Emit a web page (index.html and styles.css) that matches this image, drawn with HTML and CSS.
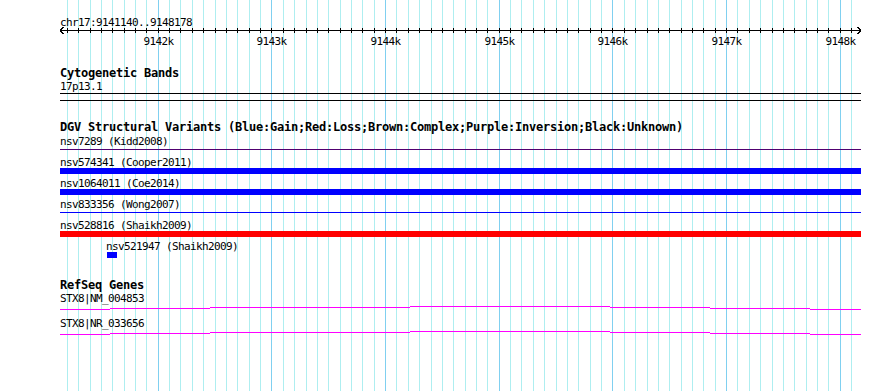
FILE: index.html
```html
<!DOCTYPE html>
<html>
    <head>
        <title>chr17:9141140..9148178</title>
        <link rel="stylesheet" href="styles.css">
    </head>
    <body>
        <div class="view">
            <!-- 100bp grid, major lines every kb -->
            <svg class="grid" width="890" height="391">
                <path class="minor" d="M67.5 0V391M78.5 0V391M90.5 0V391M101.5 0V391M112.5 0V391M124.5 0V391M135.5 0V391M146.5 0V391M169.5 0V391M180.5 0V391M192.5 0V391M203.5 0V391M215.5 0V391M226.5 0V391M237.5 0V391M249.5 0V391M260.5 0V391M283.5 0V391M294.5 0V391M306.5 0V391M317.5 0V391M328.5 0V391M340.5 0V391M351.5 0V391M362.5 0V391M374.5 0V391M396.5 0V391M408.5 0V391M419.5 0V391M431.5 0V391M442.5 0V391M453.5 0V391M465.5 0V391M476.5 0V391M487.5 0V391M510.5 0V391M521.5 0V391M533.5 0V391M544.5 0V391M556.5 0V391M567.5 0V391M578.5 0V391M590.5 0V391M601.5 0V391M624.5 0V391M635.5 0V391M647.5 0V391M658.5 0V391M669.5 0V391M681.5 0V391M692.5 0V391M703.5 0V391M715.5 0V391M737.5 0V391M749.5 0V391M760.5 0V391M772.5 0V391M783.5 0V391M794.5 0V391M806.5 0V391M817.5 0V391M828.5 0V391M851.5 0V391"/>
                <path class="major" d="M158.5 0V391M271.5 0V391M385.5 0V391M499.5 0V391M612.5 0V391M726.5 0V391M840.5 0V391"/>
            </svg>

            <div class="tracks">
                <svg class="ruler" width="890" height="50">
                    <text class="ref" x="60" y="26">chr17:9141140..9148178</text>
                    <path class="axis" d="M60 30.5H861M60 30.5L63.5 27M60 30.5L63.5 34M861 30.5L857.5 27M861 30.5L857.5 34"/>
                    <path class="axis" d="M67.5 28V33M78.5 28V33M90.5 28V33M101.5 28V33M112.5 28V33M124.5 28V33M135.5 28V33M146.5 28V33M158.5 28V33M169.5 28V33M180.5 28V33M192.5 28V33M203.5 28V33M215.5 28V33M226.5 28V33M237.5 28V33M249.5 28V33M260.5 28V33M271.5 28V33M283.5 28V33M294.5 28V33M306.5 28V33M317.5 28V33M328.5 28V33M340.5 28V33M351.5 28V33M362.5 28V33M374.5 28V33M385.5 28V33M396.5 28V33M408.5 28V33M419.5 28V33M431.5 28V33M442.5 28V33M453.5 28V33M465.5 28V33M476.5 28V33M487.5 28V33M499.5 28V33M510.5 28V33M521.5 28V33M533.5 28V33M544.5 28V33M556.5 28V33M567.5 28V33M578.5 28V33M590.5 28V33M601.5 28V33M612.5 28V33M624.5 28V33M635.5 28V33M647.5 28V33M658.5 28V33M669.5 28V33M681.5 28V33M692.5 28V33M703.5 28V33M715.5 28V33M726.5 28V33M737.5 28V33M749.5 28V33M760.5 28V33M772.5 28V33M783.5 28V33M794.5 28V33M806.5 28V33M817.5 28V33M828.5 28V33M840.5 28V33M851.5 28V33"/>
                    <text class="tick" x="158.5" y="45">9142k</text>
                    <text class="tick" x="271.5" y="45">9143k</text>
                    <text class="tick" x="385.5" y="45">9144k</text>
                    <text class="tick" x="499.5" y="45">9145k</text>
                    <text class="tick" x="612.5" y="45">9146k</text>
                    <text class="tick" x="726.5" y="45">9147k</text>
                    <text class="tick" x="840.5" y="45">9148k</text>
                </svg>

                <div class="track cyto">
                    <div class="track-title">Cytogenetic Bands</div>
                    <div class="label">17p13.1</div>
                    <div class="band"></div>
                </div>

                <div class="track dgv">
                    <div class="track-title">DGV Structural Variants (Blue:Gain;Red:Loss;Brown:Complex;Purple:Inversion;Black:Unknown)</div>
                    <div class="features">
                        <div class="feat">
                            <div class="label">nsv7289 (Kidd2008)</div>
                            <div class="glyph"><div class="line purple"></div></div>
                        </div>
                        <div class="feat">
                            <div class="label">nsv574341 (Cooper2011)</div>
                            <div class="glyph"><div class="bar blue"></div></div>
                        </div>
                        <div class="feat">
                            <div class="label">nsv1064011 (Coe2014)</div>
                            <div class="glyph"><div class="bar blue"></div></div>
                        </div>
                        <div class="feat">
                            <div class="label">nsv833356 (Wong2007)</div>
                            <div class="glyph"><div class="line blue"></div></div>
                        </div>
                        <div class="feat">
                            <div class="label">nsv528816 (Shaikh2009)</div>
                            <div class="glyph"><div class="bar red"></div></div>
                        </div>
                        <div class="feat small">
                            <div class="label">nsv521947 (Shaikh2009)</div>
                            <div class="glyph"><div class="bar blue"></div></div>
                        </div>
                    </div>
                </div>

                <div class="track genes">
                    <div class="track-title">RefSeq Genes</div>
                    <div class="gene">
                        <div class="label">STX8|NM_004853</div>
                        <svg class="intron" width="802" height="13"><path d="M0 5.5H50M50 4.5H150M150 3.5H350M350 2.5H550M550 3.5H650M650 4.5H750M750 5.5H801"/></svg>
                    </div>
                    <div class="gene">
                        <div class="label">STX8|NR_033656</div>
                        <svg class="intron" width="802" height="13"><path d="M0 5.5H50M50 4.5H150M150 3.5H350M350 2.5H550M550 3.5H650M650 4.5H750M750 5.5H801"/></svg>
                    </div>
                </div>
            </div>
        </div>
    </body>
</html>
```

FILE: styles.css
```css
body {
    margin: 0;
    background: #fff;
    color: #000;
    font-family: "DejaVu Sans Mono", monospace;
    font-size: 11px;
    letter-spacing: -0.623px;
}
.view {
    position: relative;
    width: 890px;
    height: 391px;
    overflow: hidden;
}
.grid {
    position: absolute;
    left: 0;
    top: 0;
    shape-rendering: crispEdges;
}
.grid .minor {
    stroke: #aeeef0;
    stroke-width: 1;
}
.grid .major {
    stroke: #80d0f0;
    stroke-width: 1;
}
.tracks {
    position: relative;
}
.ruler {
    display: block;
}
.ruler text {
    font-family: "DejaVu Sans Mono", monospace;
    font-size: 11px;
    letter-spacing: -0.623px;
    fill: #000;
}
.ruler .tick {
    text-anchor: middle;
}
.ruler .axis {
    stroke: #000;
    stroke-width: 1;
    fill: none;
    shape-rendering: crispEdges;
}
.track {
    padding-left: 60px;
}
.track-title {
    font-weight: bold;
    font-size: 12px;
    letter-spacing: -0.225px;
    line-height: 13px;
    height: 13px;
    white-space: nowrap;
}
.label {
    line-height: 13px;
    height: 13px;
    white-space: nowrap;
}
.cyto {
    margin-top: 17px;
}
.band {
    width: 801px;
    height: 6px;
    border-top: 1px solid #000;
    border-bottom: 1px solid #000;
}
.dgv {
    margin-top: 20px;
}
.features {
    margin-top: 1px;
}
.feat {
    height: 21px;
}
.feat .label {
    height: 12px;
}
.glyph {
    width: 801px;
    height: 6px;
}
.bar {
    height: 6px;
}
.line {
    height: 1px;
    margin-top: 2px;
}
.blue {
    background: #0000ff;
}
.red {
    background: #ff0000;
}
.purple {
    background: #500070;
}
.small .label {
    padding-left: 46px;
}
.small .bar {
    margin-left: 47px;
    width: 10px;
}
.genes {
    margin-top: 18px;
}
.gene {
    height: 25px;
}
.gene .label {
    height: 12px;
}
.intron {
    display: block;
}
.intron path {
    stroke: #ff00ff;
    stroke-width: 1;
    fill: none;
    shape-rendering: crispEdges;
}
```
